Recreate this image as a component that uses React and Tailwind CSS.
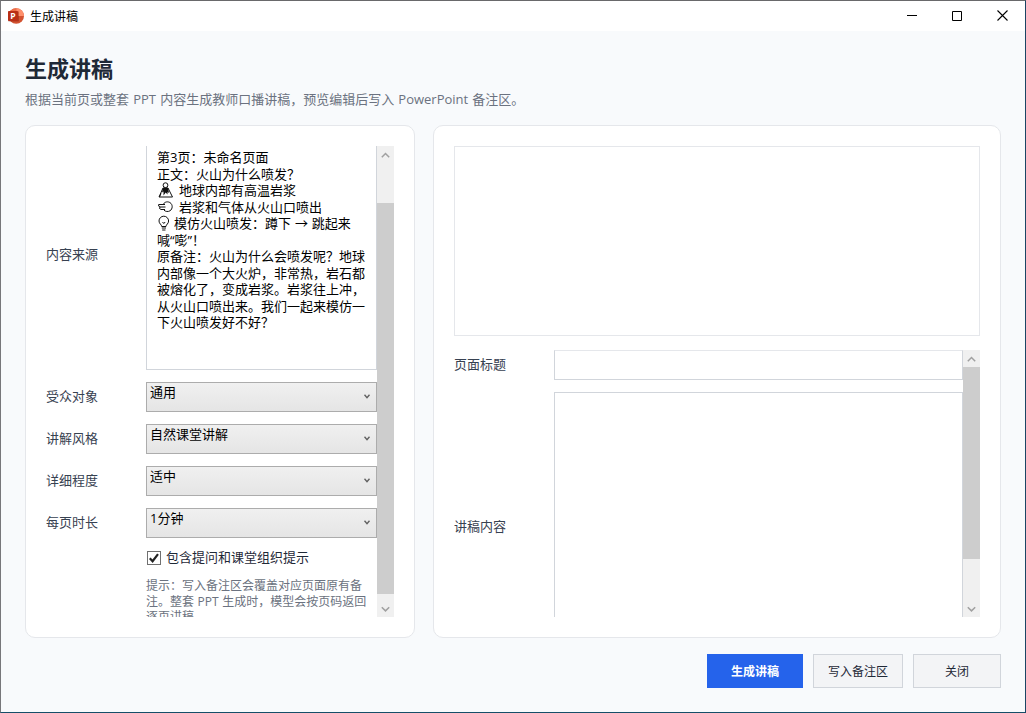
import React from "react";

const sourceLines = [
  { text: "第3页：未命名页面" },
  { text: "正文：火山为什么喷发？" },
  { icon: "volcano", text: "地球内部有高温岩浆" },
  { icon: "puff", text: "岩浆和气体从火山口喷出" },
  { icon: "bulb", text: "模仿火山喷发：蹲下 → 跳起来" },
  { text: "喊“嘭”！" },
  { text: "原备注：火山为什么会喷发呢？地球" },
  { text: "内部像一个大火炉，非常热，岩石都" },
  { text: "被熔化了，变成岩浆。岩浆往上冲，" },
  { text: "从火山口喷出来。我们一起来模仿一" },
  { text: "下火山喷发好不好？" },
];

const selects = [
  ["受众对象", "通用"],
  ["讲解风格", "自然课堂讲解"],
  ["详细程度", "适中"],
  ["每页时长", "1分钟"],
];

function LineIcon({ name }) {
  if (name === "volcano")
    return (
      <svg className="mr-[5px] h-4 w-[17px] shrink-0" viewBox="0 0 17 16" fill="none" stroke="#111" strokeWidth="1">
        <circle cx="8.5" cy="3.2" r="2.4" />
        <path d="M6 6 L2 15 H15.5 L11 6 M4 11.5 L2.5 15" />
        <path d="M6 5.5 H11 L12 11 L10.5 10 V12.5 L8.7 10.5 L6.5 13.5 V9.5 L5 10.5Z" fill="#111" stroke="none" />
      </svg>
    );
  if (name === "puff")
    return (
      <svg className="mr-[5px] h-4 w-[17px] shrink-0" viewBox="0 0 17 16" fill="none" stroke="#111" strokeWidth="1">
        <path d="M6.5 5 C8 2.5 11 2.4 13 3.6 C16 5.5 15.8 10 13 11.8 C11 13 8.5 12.6 7 11.2 M1.5 5.5 H8 M2 5.5 L1.5 7 L3 8 H8.5 M3 8 L2.5 9.5 L4 10.5 H8" />
      </svg>
    );
  return (
    <svg className="mr-[3px] h-4 w-[14px] shrink-0" viewBox="0 0 14 16" fill="none" stroke="#111" strokeWidth="1">
      <path d="M4.7 11.5 C4.7 9.5 2 8.8 2 6 A4.8 4.8 0 0 1 11.6 6 C11.6 8.8 9 9.5 9 11.5Z M4.8 13 H9 M5.2 15 H8.5 M5.5 7 L6.8 8.5 L8.2 7" />
    </svg>
  );
}

function Arrow({ up }) {
  return (
    <svg className="h-[7px] w-[9px]" viewBox="0 0 9 7" fill="none" stroke="#a0a0a0" strokeWidth="1.5">
      <path d={up ? "M.8 5.2 L4.5 1.5 L8.2 5.2" : "M.8 1.2 L4.5 4.9 L8.2 1.2"} />
    </svg>
  );
}

function PowerPointIcon() {
  return (
    <svg className="h-4 w-4" viewBox="0 0 16 16">
      <circle cx="8.2" cy="8" r="7.8" fill="#d35230" />
      <path d="M8.2 .2 A7.8 7.8 0 0 1 16 8 H8.2Z" fill="#ff8f6b" />
      <path d="M8.2 .2 A7.8 7.8 0 0 0 .4 8 H8.2Z" fill="#ed6c47" />
      <rect y="3.3" width="11" height="10.2" rx="1" fill="#7d2412" opacity=".45" />
      <rect y="3" width="10" height="10" rx="1" fill="#b92e16" />
      <text x="2.3" y="11" fontFamily="Open Sans, sans-serif" fontSize="8.5" fontWeight="700" fill="#fff">P</text>
    </svg>
  );
}

export default function App() {
  return (
    <div className="flex h-[713px] w-[1026px] flex-col overflow-hidden border border-t-[#69696b] border-r-[#1b4564] border-b-[#164e68] border-l-[#77777a] bg-[#f8fafc] text-[13px] text-[#374151] [font-family:'Open_Sans','Noto_Sans_CJK_SC',sans-serif]">
      <header className="flex h-[30px] shrink-0 items-center bg-white pb-px pl-[7px] text-xs text-black">
        <PowerPointIcon />
        <span className="ml-[6px] pt-[2px]">生成讲稿</span>
        <div className="mr-[17px] ml-auto flex items-center gap-[35px]">
          <svg className="h-[11px] w-[10px]" viewBox="0 0 10 11"><path d="M0 5.5 H10" stroke="#000" /></svg>
          <svg className="h-[10px] w-[10px]" viewBox="0 0 10 10" fill="none" stroke="#000"><path d="M.5 .5 H9.5 V9.5 H.5Z" /></svg>
          <svg className="h-[11px] w-[11px]" viewBox="0 0 11 11" fill="none" stroke="#000" strokeWidth="1.1"><path d="M.5 .5 L10.5 10.5 M10.5 .5 L.5 10.5" /></svg>
        </div>
      </header>

      <div className="h-[94px] shrink-0 px-6 pt-[22px]">
        <h1 className="text-[22px] leading-[30px] font-bold text-[#1f2937]">生成讲稿</h1>
        <p className="mt-[7px] leading-[18px] [word-spacing:0.8px] whitespace-nowrap text-[#6b7280]">根据当前页或整套 PPT 内容生成教师口播讲稿，预览编辑后写入 PowerPoint 备注区。</p>
      </div>

      <main className="flex h-[513px] shrink-0 gap-[18px] px-6">
        <section className="flex w-[390px] shrink-0 rounded-[10px] border border-[#e5e7eb] bg-white p-5">
          <div className="h-[471px] w-[331px] shrink-0 overflow-hidden">
            <div className="flex h-[224px]">
              <label className="w-[100px] pt-[98px] leading-[20px]">内容来源</label>
              <div className="flex-1 border border-t-0 border-[#d1d5db] pt-[3px] pl-[10px] text-black">
                {sourceLines.map((line) => (
                  <div key={line.text} className="flex h-[16.5px] items-center leading-[16px] [word-spacing:0.5px] whitespace-pre">
                    {line.icon && <LineIcon name={line.icon} />}
                    <span>{line.text}</span>
                  </div>
                ))}
              </div>
            </div>
            <div className="mt-3 flex flex-col gap-3">
              {selects.map(([label, value]) => (
                <div key={label} className="flex h-[30px] items-center">
                  <label className="w-[100px]">{label}</label>
                  <button className="flex h-[30px] flex-1 items-center justify-between border border-[#acacac] bg-linear-to-b from-[#f0f0f0] to-[#e5e5e5] pr-[6px] pl-[3px] text-left text-black">
                    <span className="pb-[10px] leading-[18px]">{value}</span>
                    <svg className="mb-[2px] h-[5px] w-[6px]" viewBox="0 0 6 5" fill="none" stroke="#606060" strokeWidth="1.4"><path d="M.5 .7 L3 3.6 L5.5 .7" /></svg>
                  </button>
                </div>
              ))}
            </div>
            <div className="mt-[10px] ml-[101px] flex h-5 items-center">
              <span className="flex h-[14px] w-[14px] items-center justify-center border border-[#707070] bg-white">
                <svg className="h-3 w-3 shrink-0" viewBox="0 0 12 12" fill="none" stroke="#212121" strokeWidth="2.2"><path d="M1.8 6.2 L4.6 9.2 L10 2.2" /></svg>
              </span>
              <span className="ml-[5px] text-[#1f2937]">包含提问和课堂组织提示</span>
            </div>
            <p className="mt-[10px] ml-[100px] w-[225px] text-xs leading-[15.5px] [word-spacing:0.5px] whitespace-nowrap text-[#6b7280]">
              提示：写入备注区会覆盖对应页面原有备<br />注。整套 PPT 生成时，模型会按页码返回<br />逐页讲稿
            </p>
          </div>
          <div className="flex h-[471px] w-[17px] shrink-0 flex-col bg-[#f0f0f0]">
            <div className="flex h-[57px] justify-center pt-[6px]"><Arrow up /></div>
            <div className="h-[391px] bg-[#cdcdcd]" />
            <div className="flex h-[23px] justify-center pt-[12px]"><Arrow /></div>
          </div>
        </section>

        <section className="w-[568px] shrink-0 rounded-[10px] border border-[#e5e7eb] bg-white p-5">
          <div className="h-[190px] border border-[#e5e7eb]" />
          <div className="mt-[14px] flex h-[267px] overflow-hidden">
            <div className="w-[509px]">
              <div className="flex h-[30px] items-center">
                <label className="w-[100px]">页面标题</label>
                <div className="h-[30px] flex-1 border border-[#d1d5db] border-t-[#e5e7eb]" />
              </div>
              <div className="mt-3 flex h-[225px]">
                <label className="w-[100px] pt-[124px] leading-[20px]">讲稿内容</label>
                <div className="flex-1 border border-b-0 border-[#d1d5db]" />
              </div>
            </div>
            <div className="flex w-[17px] shrink-0 flex-col bg-[#f0f0f0]">
              <div className="flex h-[17px] justify-center pt-[6px]"><Arrow up /></div>
              <div className="h-[192px] bg-[#cdcdcd]" />
              <div className="mt-auto flex h-[17px] justify-center pt-[6px]"><Arrow /></div>
            </div>
          </div>
        </section>
      </main>

      <footer className="mt-4 flex justify-end gap-[10px] pr-6 text-xs text-[#1f2937]">
        <button className="h-[34px] w-[96px] bg-[#2563eb] pt-[2px] font-bold text-white">生成讲稿</button>
        <button className="h-[34px] w-[90px] border border-[#d1d5db] bg-[#f3f4f6] pt-[2px]">写入备注区</button>
        <button className="h-[34px] w-[88px] border border-[#d1d5db] bg-[#f3f4f6] pt-[2px]">关闭</button>
      </footer>
    </div>
  );
}
